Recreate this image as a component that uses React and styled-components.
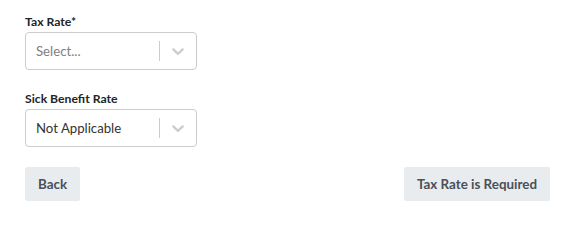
import React from "react";
import styled, { createGlobalStyle } from "styled-components";

const Global = createGlobalStyle`
  html, body { margin: 0; padding: 0; background: #fff; }
  body { font-family: Lato, "Noto Sans", sans-serif; color: #212529; }
`;

const Page = styled.div`
  width: 563px;
  height: 209px;
  box-sizing: border-box;
  padding: 13px 13px 0 25px;
  display: flex;
  flex-direction: column;
`;

const Field = styled.div`
  display: flex;
  flex-direction: column;
  margin-bottom: ${(p) => p.$mb}px;
`;

const Label = styled.label`
  font-size: 12.2px;
  font-weight: 700;
  line-height: 18px;
  margin-bottom: 1px;
  color: #212529;
`;

const SelectBox = styled.div`
  width: 172px;
  height: 38px;
  box-sizing: border-box;
  border: 1px solid #ccc;
  border-radius: 4px;
  display: flex;
  align-items: center;
  background: #fff;
`;

const Value = styled.div`
  flex: 1;
  padding-left: 10px;
  font-size: 13.2px;
  color: ${(p) => (p.$placeholder ? "#808080" : "#333")};
`;

const Separator = styled.span`
  width: 1px;
  align-self: stretch;
  margin: 8px 0;
  background: #ccc;
`;

const Indicator = styled.div`
  padding: 8px;
  display: flex;
  color: #ccc;
`;

const Buttons = styled.div`
  display: flex;
  justify-content: space-between;
`;

const Button = styled.button`
  height: 34px;
  padding: 0 13px;
  border: none;
  border-radius: 2px;
  background: #e9ecef;
  color: #495057;
  font-family: Lato, "Noto Sans", sans-serif;
  font-size: 13.4px;
  font-weight: 700;
`;

const Chevron = () => (
  <svg width="20" height="20" viewBox="0 0 20 20" fill="currentColor">
    <path d="M4.516 7.548c0.436-0.446 1.043-0.481 1.576 0l3.908 3.747 3.908-3.747c0.533-0.481 1.141-0.446 1.574 0 0.436 0.445 0.408 1.197 0 1.615-0.406 0.418-4.695 4.502-4.695 4.502-0.217 0.223-0.502 0.335-0.787 0.335s-0.57-0.112-0.789-0.335c0 0-4.287-4.084-4.695-4.502s-0.436-1.17 0-1.615z" />
  </svg>
);

const Select = ({ value, placeholder }) => (
  <SelectBox>
    <Value $placeholder={!value}>{value || placeholder}</Value>
    <Separator />
    <Indicator>
      <Chevron />
    </Indicator>
  </SelectBox>
);

export default function App() {
  return (
    <>
      <Global />
      <Page>
        <Field $mb={20}>
          <Label>Tax Rate*</Label>
          <Select placeholder="Select..." />
        </Field>
        <Field $mb={20}>
          <Label>Sick Benefit Rate</Label>
          <Select value="Not Applicable" />
        </Field>
        <Buttons>
          <Button>Back</Button>
          <Button>Tax Rate is Required</Button>
        </Buttons>
      </Page>
    </>
  );
}
